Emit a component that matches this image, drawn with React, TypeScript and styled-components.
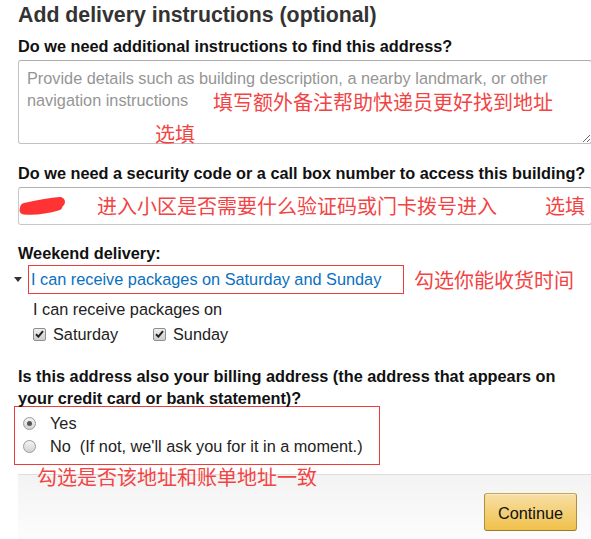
import React from 'react';
import styled, { createGlobalStyle } from 'styled-components';

const GlobalStyle = createGlobalStyle`
  html, body {
    margin: 0;
    padding: 0;
    background: #fff;
  }
  body {
    font-family: "Liberation Sans", Arial, sans-serif;
    color: #111;
    overflow: hidden;
  }
  * {
    box-sizing: border-box;
  }
`;

const TEXT = '16.3px';

const Page = styled.div`
  width: 591px;
  height: 539px;
  overflow: hidden;
  padding-left: 18px;
`;

const Title = styled.h3`
  margin: 0;
  padding-top: 3px;
  font-size: 21.3px;
  line-height: 24px;
  font-weight: bold;
  color: #333;
`;

const Label = styled.div<{ $mt: number; $mb?: number }>`
  margin: ${p => p.$mt}px 0 ${p => p.$mb ?? 4}px 0;
  font-size: ${TEXT};
  line-height: 20px;
  font-weight: bold;
  color: #111;
`;

const Question = styled.div`
  margin-top: 21px;
  font-size: ${TEXT};
  line-height: 22px;
  font-weight: bold;
  color: #111;
`;

// red hand-written notes laid over the screenshot
const Note = styled.span`
  font-family: "Noto Sans CJK SC", sans-serif;
  font-size: 20px;
  line-height: 20px;
  color: #f24444;
  white-space: nowrap;
`;

const OverNote = styled(Note)<{ $x: number; $y: number }>`
  position: absolute;
  left: ${p => p.$x}px;
  top: ${p => p.$y}px;
  pointer-events: none;
`;

const RowNote = styled(Note)<{ $gap: number }>`
  margin-left: ${p => p.$gap}px;
`;

const BottomNote = styled(Note)`
  display: block;
  position: relative;
  z-index: 1;
  margin: 2px 0 -13px 19px;
`;

const NoteWrap = styled.div`
  position: relative;
  width: 574px;
`;

const NoteArea = styled.textarea`
  display: block;
  width: 574px;
  height: 84px;
  margin: 0;
  padding: 6px 8px;
  border: 1px solid #c2c2c2;
  border-top-color: #adadad;
  border-radius: 3px;
  font: ${TEXT}/22px "Liberation Sans", Arial, sans-serif;
  color: #111;
  resize: vertical;
  outline: none;

  &::placeholder {
    color: #959595;
  }
`;

const CodeBox = styled.div`
  display: flex;
  align-items: center;
  width: 574px;
  height: 38px;
  border: 1px solid #c8c8c8;
  border-top-color: #b0b0b0;
  border-radius: 3px;
`;

const Scribble = styled.svg`
  flex: none;
  margin-left: -1px;
`;

const ToggleRow = styled.div`
  display: flex;
  align-items: center;
  margin: 2px 0 0 -4px;
`;

const Caret = styled.span`
  width: 0;
  height: 0;
  border-left: 4px solid transparent;
  border-right: 4px solid transparent;
  border-top: 5px solid #333;
  margin-right: 6px;
`;

const ToggleLink = styled.a`
  display: block;
  width: 376px;
  height: 29px;
  padding-left: 2px;
  line-height: 27px;
  border: 1px solid #ec3b3b;
  color: #0a70c0;
  font-size: ${TEXT};
  text-decoration: none;
`;

const Plain = styled.div`
  margin-top: 5px;
  padding-left: 15px;
  font-size: ${TEXT};
  line-height: 20px;
  color: #222;
`;

const CheckRow = styled.div`
  display: flex;
  margin-top: 5px;
  padding-left: 15px;
  font-size: ${TEXT};
  line-height: 20px;
  color: #222;
`;

const CheckItem = styled.label`
  display: flex;
  align-items: center;
  width: 120px;
`;

const CheckBox = styled.span`
  display: flex;
  align-items: center;
  justify-content: center;
  width: 13px;
  height: 13px;
  margin-right: 7px;
  border: 1px solid #8e8e8e;
  border-radius: 2px;
  background: linear-gradient(#eeeeee, #cdcdcd);
`;

const RadioBox = styled.div`
  width: 366px;
  margin: -3px 0 0 -4px;
  padding: 5px 0 6px 8px;
  border: 1px solid #ec3b3b;
`;

const RadioRow = styled.label`
  display: flex;
  align-items: center;
  height: 23px;
  font-size: ${TEXT};
  line-height: 23px;
  color: #222;
`;

const Radio = styled.span<{ $on?: boolean }>`
  display: flex;
  align-items: center;
  justify-content: center;
  width: 13px;
  height: 13px;
  margin-right: 14px;
  border: 1px solid #9a9a9a;
  border-radius: 50%;
  background: linear-gradient(#f4f4f4, #d3d3d3);

  &::after {
    content: "";
    display: ${p => (p.$on ? 'block' : 'none')};
    width: 5px;
    height: 5px;
    border-radius: 50%;
    background: #555;
  }
`;

const Footer = styled.div`
  display: flex;
  justify-content: flex-end;
  width: 573px;
  height: 70px;
  padding: 18px 14px 0 0;
  border-top: 1px solid #dedede;
  background: linear-gradient(#f3f3f3, #fdfdfd);
`;

const ContinueButton = styled.button`
  width: 93px;
  height: 38px;
  padding: 2px 0 0;
  border: 1px solid;
  border-color: #c8a651 #b08e3a #9a7a2c;
  border-radius: 3px;
  background: linear-gradient(#f7dfa5, #f0c14b);
  box-shadow: inset 0 1px 0 rgba(255, 255, 255, 0.4);
  font: ${TEXT} "Liberation Sans", Arial, sans-serif;
  color: #111;
  cursor: pointer;
`;

const Tick = () => (
  <svg width="9" height="8" viewBox="0 0 9 8">
    <path d="M1 4.2 L3.4 6.6 L8 1.2" fill="none" stroke="#222" strokeWidth="2" />
  </svg>
);

export default function App() {
  return (
    <>
      <GlobalStyle />
      <Page>
        <Title>Add delivery instructions (optional)</Title>

        <Label $mt={9}>Do we need additional instructions to find this address?</Label>
        <NoteWrap>
          <NoteArea placeholder="Provide details such as building description, a nearby landmark, or other navigation instructions" />
          <OverNote $x={195} $y={32}>填写额外备注帮助快递员更好找到地址</OverNote>
          <OverNote $x={137} $y={64}>选填</OverNote>
        </NoteWrap>

        <Label $mt={19}>Do we need a security code or a call box number to access this building?</Label>
        <CodeBox>
          <Scribble width="49" height="22" viewBox="0 0 49 22">
            <path d="M7 13 C16 11, 30 8, 42 7" stroke="#f33" strokeWidth="10" strokeLinecap="round" fill="none" />
            <path d="M6 15 C18 16, 30 14, 40 11" stroke="#f33" strokeWidth="9" strokeLinecap="round" fill="none" />
          </Scribble>
          <RowNote $gap={30}>进入小区是否需要什么验证码或门卡拨号进入</RowNote>
          <RowNote $gap={48}>选填</RowNote>
        </CodeBox>

        <Label $mt={18} $mb={0}>Weekend delivery:</Label>
        <ToggleRow>
          <Caret />
          <ToggleLink href="#">I can receive packages on Saturday and Sunday</ToggleLink>
          <RowNote $gap={10}>勾选你能收货时间</RowNote>
        </ToggleRow>
        <Plain>I can receive packages on</Plain>
        <CheckRow>
          <CheckItem>
            <CheckBox><Tick /></CheckBox>
            Saturday
          </CheckItem>
          <CheckItem>
            <CheckBox><Tick /></CheckBox>
            Sunday
          </CheckItem>
        </CheckRow>

        <Question>
          Is this address also your billing address (the address that appears on your credit card or bank statement)?
        </Question>
        <RadioBox>
          <RadioRow>
            <Radio $on />
            Yes
          </RadioRow>
          <RadioRow>
            <Radio />
            No&nbsp; (If not, we'll ask you for it in a moment.)
          </RadioRow>
        </RadioBox>
        <BottomNote>勾选是否该地址和账单地址一致</BottomNote>

        <Footer>
          <ContinueButton>Continue</ContinueButton>
        </Footer>
      </Page>
    </>
  );
}
